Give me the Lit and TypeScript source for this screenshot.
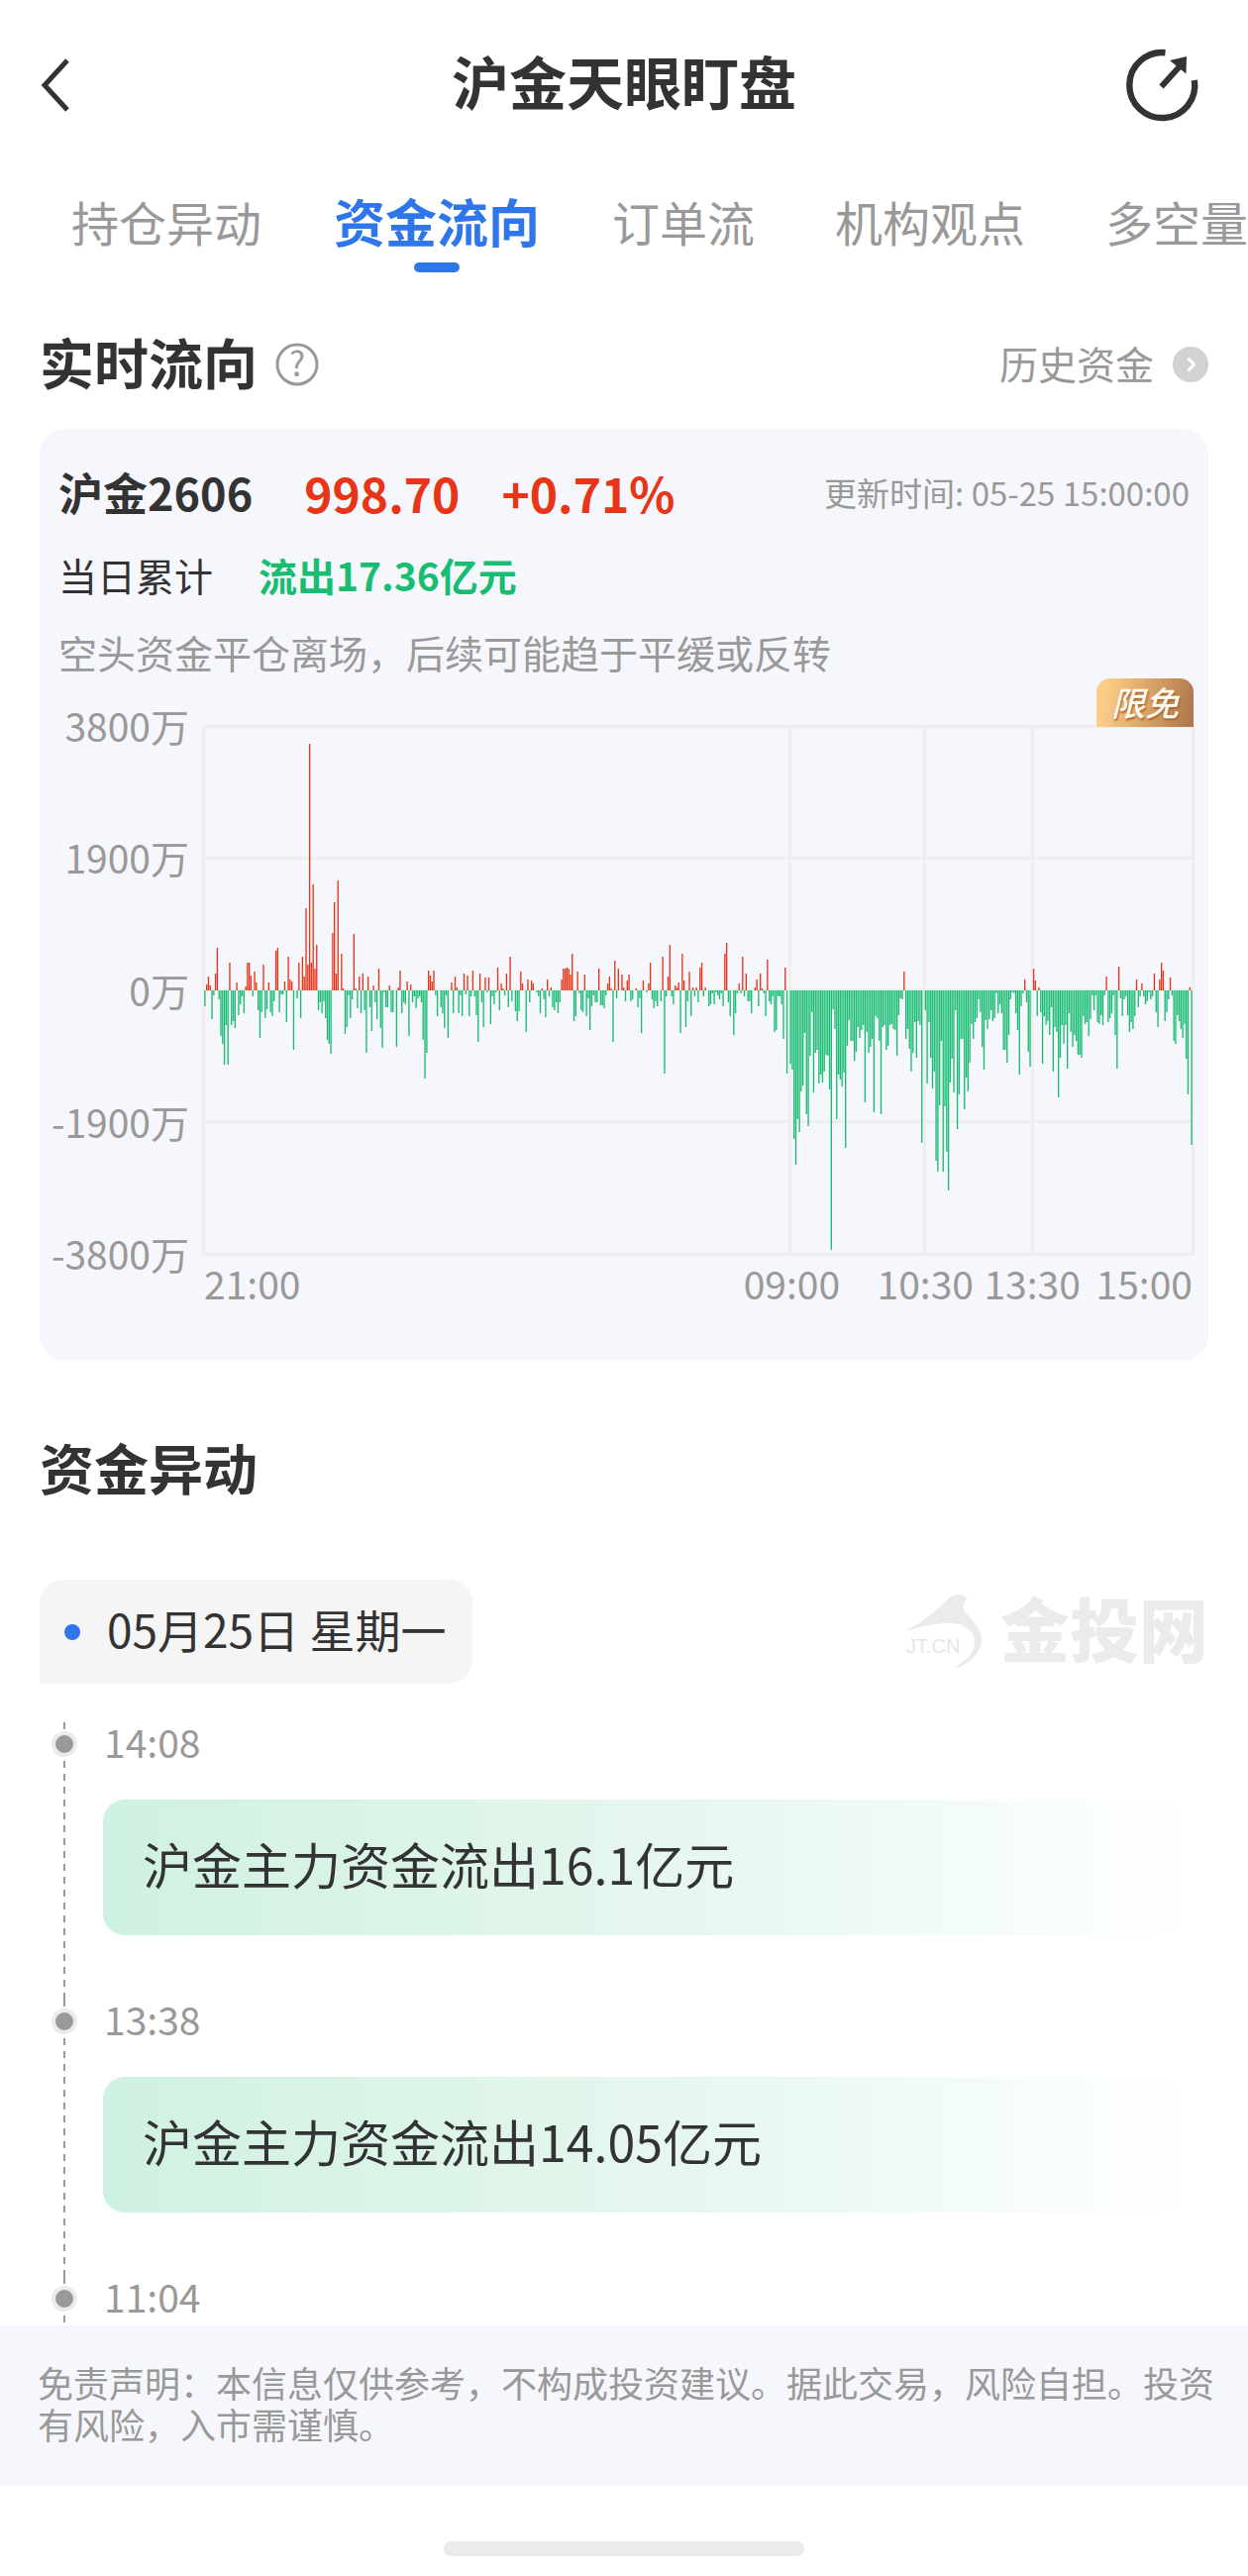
import { LitElement, html, css, svg, nothing } from "lit";
import { customElement, property } from "lit/decorators.js";
import { classMap } from "lit/directives/class-map.js";

/* Minute-by-minute net flow, in chart units (267 units = 3800万). */
const FLOW: number[] = [
  -16, 6, 14, 5, -29, -5, 17, 43, -9, -46, -54, -75, -35, -75, 28, -35, -31, -38, 8, -25,
  -14, -6, -23, 4, 28, 28, 15, -6, 19, 8, -20, -48, -22, 26, -28, -19, 8, -22, -26, -11,
  40, 43, -22, -4, -4, 9, -32, 34, 11, 9, -60, 0, -8, 28, -28, 34, 14, 83, 26, 249,
  28, 107, 22, 46, -20, -12, -23, -11, -28, -50, -54, -64, 58, 89, 17, 111, 0, 37, 2, -44,
  -37, -5, -28, -9, 57, 2, -18, 14, -23, 17, -20, -63, 14, -17, -41, 5, -12, -29, 22, -38,
  -58, -2, -17, -17, 5, -22, -22, 0, -57, 3, 20, -23, -12, -14, 9, -46, 6, -12, -6, -18,
  -8, -6, -12, -50, -89, -63, 20, 15, 9, 20, -5, -26, 0, -17, -23, -38, -5, -48, 0, 8,
  -23, 14, 3, -23, -5, -26, 17, -4, 15, -26, -6, 20, -6, -25, -52, 17, -12, -37, 13, -2,
  13, -34, -6, -14, -2, 23, -20, 7, 2, -5, 17, -17, 34, -11, 0, -21, -31, -21, 19, 7,
  0, -42, 11, -12, 10, 7, 0, -2, -6, -23, 2, -9, -27, 11, -6, 3, -17, -20, -12, -23,
  -12, 11, 22, 22, 23, 22, 16, 37, -31, -26, 19, -3, -20, -22, 16, -26, -8, -40, -16, -5,
  -12, -12, 22, -15, -15, -18, -5, 7, 14, 2, -52, 30, -8, 22, 0, 16, 3, -11, 10, 16,
  -11, -9, 0, 2, -17, -8, -43, 10, 0, -2, 7, 28, -9, -18, -11, -16, 0, -11, 34, -84,
  -6, 14, 46, -6, -14, 5, 3, 8, -43, 37, 10, -37, -11, 19, -26, 3, -6, 3, -12, 23,
  28, -6, 3, 0, -16, -14, -3, -14, -2, -5, -9, -3, -16, 37, 48, -12, -26, 0, -45, -23,
  -3, 7, -3, 34, -6, 17, -11, -11, -23, 0, 3, 11, -16, 17, 2, -3, -26, 31, -11, -14,
  -6, -42, -40, -6, -6, -14, -49, 23, -84, 0, -74, -80, -150, -176, -130, -143, -102, -96, -43, -125,
  -137, -66, -22, -103, -63, -60, -94, -85, -93, -82, -65, -66, -100, -262, -19, -39, -130, -85, -90, -97,
  -83, -159, -56, -30, -51, -51, -71, -62, -37, -48, -40, -35, -113, -42, -63, -57, -49, -123, -26, -28,
  -51, -125, -37, -35, -60, -56, -35, -34, -39, -40, -66, -25, -8, -9, 19, -49, -39, -59, -82, -63,
  -32, -68, -31, -35, -154, 0, -20, -94, -32, -68, -99, -82, -172, -183, -116, -51, -183, -117, -163, -202,
  -93, -69, -103, -20, -140, -105, -49, -49, -120, -88, -102, -73, -34, -49, -32, -28, -9, -22, -57, -80,
  -30, -39, -29, -20, -31, -28, -3, -23, -14, -23, -60, -60, -73, -45, -9, -2, -3, -23, -40, -85,
  -16, -3, 11, -12, -62, -77, 0, 22, 10, -26, 3, -22, -74, -26, -35, -31, -45, -17, -82, -37,
  -42, -108, -68, -35, -54, -35, -79, -23, -42, -57, -45, -51, -65, -65, -68, -26, -34, -32, -46, -29,
  -5, -20, -5, -32, -34, -25, -35, -5, 14, -32, -28, -23, -5, -45, -79, 24, -8, -26, -9, -6,
  -25, -42, -32, -39, -26, 11, -17, -6, 7, -6, -14, -11, -2, -9, -6, 17, -22, -37, 11, 28,
  20, -31, -22, -9, 13, -5, -51, -54, -25, -31, -39, -48, -34, -69, -105, 3, -156,
];

const PLOT_W = 1002;
const PLOT_H = 536;
const ZERO = 268;
const INSET = 2;
const BAR = 1.35;

function barPath(positive: boolean): string {
  const step = (PLOT_W - INSET * 2) / FLOW.length;
  return FLOW.map((v, i) => {
    if (v === 0 || v > 0 !== positive) return "";
    const x = (INSET + i * step + 0.2).toFixed(2);
    return `M${x} ${ZERO}h${BAR}v${-v}h${-BAR}z`;
  }).join("");
}

@customElement("flow-chart")
export class FlowChart extends LitElement {
  static styles = css`
    :host {
      display: block;
      color: #999;
      font-size: 39px;
      line-height: 48px;
    }
    .chart {
      display: grid;
      grid-template-columns: 151px minmax(0, 1fr);
      column-gap: 13px;
      padding-right: 14px;
    }
    .y-axis {
      display: flex;
      flex-direction: column;
      justify-content: space-between;
      align-items: flex-end;
      margin: -24px 0 -21px;
      white-space: nowrap;
    }
    .plot {
      position: relative;
    }
    .canvas {
      display: block;
      width: 100%;
      height: 536px;
    }
    .grid {
      fill: none;
      stroke: #eee;
      stroke-width: 3;
    }
    .inflow {
      fill: #e73518;
    }
    .outflow {
      fill: #18bd72;
    }
    .badge {
      position: absolute;
      right: 1px;
      bottom: 100%;
      margin-bottom: -2px;
      box-sizing: border-box;
      width: 98px;
      height: 49px;
      border-radius: 14px 14px 0 0;
      background: linear-gradient(100deg, #fccd88 10%, #e0ac6c 45%, #ac744a);
      color: #fffaf0;
      font-size: 34px;
      font-style: italic;
      font-weight: 500;
      line-height: 48px;
      text-align: center;
      text-shadow: 1px 2px 2px #a8642f;
    }
    .x-axis {
      grid-column: 2;
      display: grid;
      grid-template-columns: 330fr 75fr 60fr 90fr;
      margin-top: 3px;
      padding: 0 2px;
    }
    .session {
      display: flex;
      justify-content: space-between;
      min-width: 0;
    }
    .centered {
      display: flex;
      justify-content: center;
      width: 0;
    }
  `;

  render() {
    return html`
      <div class="chart">
        <div class="y-axis">
          <span>3800万</span><span>1900万</span><span>0万</span><span>-1900万</span><span>-3800万</span>
        </div>
        <div class="plot">
          <svg class="canvas" viewBox="0 0 ${PLOT_W} ${PLOT_H}" preserveAspectRatio="none" aria-hidden="true">
            ${svg`
              <path class="grid" d="M0 1.5H1002M0 134.5H1002M0 267.5H1002M0 400.5H1002M0 534.5H1002M1.5 0V536M593.5 0V536M729.5 0V536M838.5 0V536M1000.5 0V536"/>
              <path class="inflow" d=${barPath(true)} />
              <path class="outflow" d=${barPath(false)} />
            `}
          </svg>
          <span class="badge">限免</span>
        </div>
        <div class="x-axis">
          <div class="session"><span>21:00</span></div>
          <div class="session"><span class="centered">09:00</span></div>
          <div class="session"><span class="centered">10:30</span></div>
          <div class="session"><span class="centered">13:30</span><span>15:00</span></div>
        </div>
      </div>
    `;
  }
}

@customElement("timeline-item")
export class TimelineItem extends LitElement {
  @property() time = "";
  @property() message = "";

  static styles = css`
    :host {
      display: block;
    }
    .item {
      display: grid;
      grid-template-columns: 26px minmax(0, 1fr);
      column-gap: 26px;
    }
    .rail {
      margin: 2px 0 -2px;
      background: repeating-linear-gradient(#999 0 7px, transparent 7px 13px) center top / 2px 100% no-repeat;
    }
    .node {
      box-sizing: border-box;
      width: 26px;
      height: 26px;
      margin-top: 9px;
      border: 4px solid #ebebeb;
      border-radius: 50%;
      background: #999;
    }
    .time {
      display: block;
      padding: 0 0 6px 1px;
      color: #999;
      font-size: 39px;
      line-height: 42px;
    }
    .message {
      margin: 32px 0 63px;
      padding: 0 40px 8px;
      border-radius: 22px;
      background: linear-gradient(90deg, #cff1e2, #dff5ea 35%, #eaf8f2 60%, #f4fcf9 80%, #fff 98%);
      color: #333;
      font-size: 50px;
      line-height: 129px;
    }
  `;

  render() {
    return html`
      <div class="item">
        <div class="rail"><div class="node"></div></div>
        <div>
          <time class="time">${this.time}</time>
          ${this.message ? html`<p class="message">${this.message}</p>` : nothing}
        </div>
      </div>
    `;
  }
}

@customElement("app-root")
export class AppRoot extends LitElement {
  static styles = css`
    :host {
      display: block;
      overflow: hidden;
      background: #fff;
      color: #333;
      font-family: "Noto Sans CJK SC", "Noto Sans", sans-serif;
    }
    button {
      padding: 0;
      border: 0;
      background: none;
      color: inherit;
      font: inherit;
      cursor: pointer;
    }
    a {
      color: inherit;
      text-decoration: none;
    }
    h1,
    h2,
    p {
      margin: 0;
    }
    .header {
      display: grid;
      grid-template-columns: 72px 1fr 72px;
      align-items: center;
      height: 168px;
      padding: 4px 51px 0 40px;
      box-sizing: border-box;
    }
    .title {
      font-size: 58px;
      font-weight: 700;
      line-height: 80px;
      text-align: center;
      padding: 0 0 10px 11px;
    }
    .icon {
      display: block;
      overflow: visible;
    }
    .tabs {
      display: flex;
      gap: 81px;
      padding: 23px 0 0 72px;
      white-space: nowrap;
    }
    .tab {
      display: flex;
      flex: none;
      flex-direction: column;
      align-items: center;
      gap: 10px;
      color: #999;
      font-size: 48px;
      line-height: 64px;
    }
    .tab::after {
      content: "";
      width: 46px;
      height: 10px;
      border-radius: 5px;
    }
    .active {
      margin: 0 -8px;
      color: #2f76ea;
      font-size: 52px;
      font-weight: 700;
    }
    .active::after {
      background: #2f76ea;
    }
    .section-head {
      display: flex;
      align-items: center;
      padding: 0 40px;
    }
    .flow-head {
      margin-top: 57px;
    }
    .heading {
      padding-bottom: 8px;
      font-size: 55px;
      font-weight: 700;
      line-height: 64px;
    }
    .help {
      margin-left: 18px;
    }
    .help-mark {
      font-size: 34px;
      fill: #999;
    }
    .history {
      display: flex;
      align-items: center;
      gap: 19px;
      margin-left: auto;
      color: #999;
      font-size: 39px;
      line-height: 52px;
    }
    .history-text {
      padding-bottom: 4px;
    }
    .card {
      margin: 29px 40px 0;
      padding: 34px 0 55px;
      border-radius: 26px;
      background: #f6f7fc;
    }
    .row {
      display: flex;
      align-items: center;
      padding: 0 19px;
      font-size: 39px;
      line-height: 56px;
    }
    .quote {
      font-size: 45px;
      font-weight: 700;
      line-height: 60px;
    }
    .price {
      display: flex;
      gap: 42px;
      margin-left: 52px;
      color: #e73518;
      font-size: 48px;
    }
    .updated {
      margin-left: auto;
      color: #999;
      font-size: 33px;
      font-weight: 400;
    }
    .total {
      gap: 46px;
      margin-top: 25px;
    }
    .outflow {
      color: #18bd72;
      font-weight: 700;
    }
    .comment {
      margin-top: 22px;
      margin-bottom: 46px;
      color: #999;
    }
    .moves-head {
      margin-top: 74px;
    }
    .day {
      display: flex;
      align-items: center;
      justify-content: space-between;
      margin: 75px 40px 37px;
    }
    .date {
      display: flex;
      align-items: center;
      gap: 27px;
      padding: 0 27px 0 25px;
      border-radius: 24px 24px 24px 0;
      background: #f5f5f5;
      font-size: 46px;
      line-height: 99px;
    }
    .date::before {
      content: "";
      width: 16px;
      height: 16px;
      border-radius: 50%;
      background: #2f76ea;
    }
    .date-text {
      padding-bottom: 6px;
    }
    .brand {
      display: flex;
      align-items: center;
      gap: 18px;
      color: #ebebeb;
      font-size: 70px;
      font-weight: 900;
      line-height: 70px;
    }
    .brand-name {
      padding-bottom: 10px;
    }
    .brand-tag {
      fill: #e6e6e6;
      font-family: "Liberation Sans", sans-serif;
      font-size: 20px;
      font-weight: 400;
    }
    .timeline {
      padding: 0 40px 0 52px;
    }
    .disclaimer {
      margin-top: 3px;
      padding: 36px 34px 42px 38px;
      background: #f6f7fc;
      color: #999;
      font-size: 36px;
      line-height: 42px;
    }
    .home-bar {
      width: 364px;
      height: 15px;
      margin: 56px auto 20px;
      border-radius: 7px;
      background: #ebebeb;
    }
  `;

  private tabs = ["持仓异动", "资金流向", "订单流", "机构观点", "多空量"];

  render() {
    return html`
      <header class="header">
        <button aria-label="返回">
          <svg class="icon" width="34" height="56" viewBox="0 0 34 56" fill="none" stroke="#333" stroke-width="5">
            <path d="M28 3L5 28L28 53" />
          </svg>
        </button>
        <h1 class="title">沪金天眼盯盘</h1>
        <button aria-label="分享">
          <svg class="icon" width="72" height="72" viewBox="0 0 72 72">
            <path d="M39.5 3.2A33 33 0 1 0 68.9 31" fill="none" stroke="#333" stroke-width="6.4" />
            <path d="M35.500 37.500L55 16" stroke="#333" stroke-width="6" />
            <path d="M61 7L44 11L60.500 24.500z" fill="#333" />
          </svg>
        </button>
      </header>

      <nav class="tabs">
        ${this.tabs.map(
          (label, i) => html`<button class=${classMap({ tab: true, active: i === 1 })}>${label}</button>`,
        )}
      </nav>

      <section>
        <div class="section-head flow-head">
          <h2 class="heading">实时流向</h2>
          <button class="help" aria-label="说明">
            <svg class="icon" width="44" height="44" viewBox="0 0 44 44">
              <circle cx="22" cy="22" r="20" fill="none" stroke="#999" stroke-width="3" />
              <text class="help-mark" x="22" y="34" text-anchor="middle">?</text>
            </svg>
          </button>
          <a class="history" href="#history">
            <span class="history-text">历史资金</span>
            <svg class="icon" width="36" height="36" viewBox="0 0 36 36">
              <circle cx="18" cy="18" r="18" fill="#d2d2d2" />
              <path d="M15.500 11.500L21.500 18L15.500 24.500" fill="none" stroke="#fff" stroke-width="3" />
            </svg>
          </a>
        </div>

        <div class="card">
          <div class="row quote">
            <span>沪金2606</span>
            <span class="price"><span>998.70</span><span>+0.71%</span></span>
            <span class="updated">更新时间: 05-25 15:00:00</span>
          </div>
          <div class="row total">
            <span>当日累计</span>
            <span class="outflow">流出17.36亿元</span>
          </div>
          <p class="row comment">空头资金平仓离场，后续可能趋于平缓或反转</p>
          <flow-chart></flow-chart>
        </div>
      </section>

      <section>
        <div class="section-head moves-head"><h2 class="heading">资金异动</h2></div>
        <div class="day">
          <div class="date"><span class="date-text">05月25日 星期一</span></div>
          <div class="brand">
            <svg class="icon" width="82" height="80" viewBox="0 0 82 80">
              <path
                d="M3 39C25 29 38 15 48 6C54 1 62 0 67 7C62 9 61 15 65 21C75 31 81 38 81 48C81 60 68 74 52 77C66 68 74 61 74 50C74 40 64 31 50 31C32 30 16 36 3 39z"
                fill="#ebebeb"
              />
              <text class="brand-tag" x="5" y="61">JT.CN</text>
            </svg>
            <span class="brand-name">金投网</span>
          </div>
        </div>
        <div class="timeline">
          <timeline-item time="14:08" message="沪金主力资金流出16.1亿元"></timeline-item>
          <timeline-item time="13:38" message="沪金主力资金流出14.05亿元"></timeline-item>
          <timeline-item time="11:04"></timeline-item>
        </div>
      </section>

      <footer>
        <p class="disclaimer">
          免责声明：本信息仅供参考，不构成投资建议。据此交易，风险自担。投资有风险，入市需谨慎。
        </p>
        <div class="home-bar"></div>
      </footer>
    `;
  }
}
